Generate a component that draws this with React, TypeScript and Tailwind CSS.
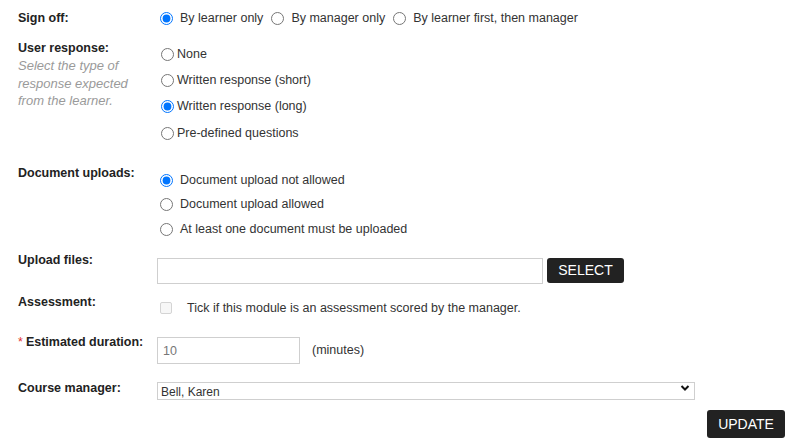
import React from "react";

const font = { fontFamily: '"Liberation Sans", Arial, sans-serif' };

const Label: React.FC<{ children: React.ReactNode; required?: boolean }> = ({ children, required }) => (
  <div className="w-[139px] shrink-0 text-[12.5px] leading-[18px] font-bold text-[#222]">
    {required && <span className="text-[#e3342f] font-normal mr-[3px]">*</span>}
    {children}
  </div>
);

const Radio: React.FC<{ name: string; checked?: boolean }> = ({ name, checked }) => (
  <input
    type="radio"
    name={name}
    defaultChecked={checked}
    className="m-0 w-[13px] h-[13px] shrink-0 accent-[#0075ff]"
  />
);

const signOff = ["By learner only", "By manager only", "By learner first, then manager"];
const responses = ["None", "Written response (short)", "Written response (long)", "Pre-defined questions"];
const uploads = ["Document upload not allowed", "Document upload allowed", "At least one document must be uploaded"];

export default function App() {
  return (
    <div className="w-[789px] h-[439px] bg-white pl-[18px] pt-[9px] text-[#333] overflow-hidden" style={font}>
      {/* sign off */}
      <div className="flex items-start h-[30px]">
        <Label>Sign off:</Label>
        <div className="flex items-center h-[18px] pl-[3px] text-[12.5px]">
          {signOff.map((s, i) => (
            <label key={s} className="flex items-center">
              <Radio name="signoff" checked={i === 0} />
              <span className="ml-[7px] mr-[8px]">{s}</span>
            </label>
          ))}
        </div>
      </div>

      {/* user response */}
      <div className="flex items-start h-[125px]">
        <div className="w-[139px] shrink-0">
          <Label>User response:</Label>
          <p className="italic text-[13px] leading-[17.5px] text-[#9a9a9a] w-[110px]">
            Select the type of response expected from the learner.
          </p>
        </div>
        <div className="flex flex-col pt-[2px] pl-[4px] text-[12.5px]">
          {responses.map((r, i) => (
            <label key={r} className="flex items-center h-[26.3px]">
              <Radio name="response" checked={i === 2} />
              <span className="ml-[3px]">{r}</span>
            </label>
          ))}
        </div>
      </div>

      {/* document uploads */}
      <div className="flex items-start h-[87px]">
        <Label>Document uploads:</Label>
        <div className="flex flex-col pt-[4px] pl-[3px] text-[12.5px]">
          {uploads.map((u, i) => (
            <label key={u} className="flex items-center h-[24.5px]">
              <Radio name="uploads" checked={i === 0} />
              <span className="ml-[7px]">{u}</span>
            </label>
          ))}
        </div>
      </div>

      {/* upload files */}
      <div className="flex items-start h-[42px]">
        <Label>Upload files:</Label>
        <div className="flex mt-[7px] gap-[4px]">
          <input type="text" className="w-[386px] h-[26px] border border-[#cfcfcf] outline-none" />
          <button className="w-[77px] h-[25px] bg-[#222] text-white text-[14px] rounded-[3px]">SELECT</button>
        </div>
      </div>

      {/* assessment */}
      <div className="flex items-start h-[40px]">
        <Label>Assessment:</Label>
        <div className="flex items-center h-[18px] mt-[6px] text-[12.5px]">
          <span className="ml-[3px] w-[12px] h-[12px] rounded-[2px] border border-[#d4d4d4] bg-[#f7f7f7]" />
          <span className="ml-[15px]">Tick if this module is an assessment scored by the manager.</span>
        </div>
      </div>

      {/* estimated duration */}
      <div className="flex items-start h-[46px]">
        <Label required>Estimated duration:</Label>
        <div className="flex items-center mt-[4px] text-[12.5px]">
          <input
            type="text"
            defaultValue="10"
            className="w-[143px] h-[27px] border border-[#cfcfcf] px-[5px] text-[#777] outline-none"
          />
          <span className="ml-[12px]">(minutes)</span>
        </div>
      </div>

      {/* course manager */}
      <div className="flex items-start h-[31px]">
        <Label>Course manager:</Label>
        <div className="relative w-[538px] h-[18px]">
          <select className="appearance-none w-full h-full border border-[#cfcfcf] pl-[3px] text-[12px] text-[#333] bg-white outline-none">
            <option>Bell, Karen</option>
          </select>
          <svg
            className="absolute right-[5px] top-[5px] pointer-events-none"
            width="10"
            height="8"
            viewBox="0 0 10 8"
          >
            <path d="M1.5 2 L5 5.5 L8.5 2" fill="none" stroke="#111" strokeWidth="2" />
          </svg>
        </div>
      </div>

      {/* update */}
      <div className="flex justify-end pr-[4px]">
        <button className="w-[78px] h-[28px] bg-[#222] text-white text-[14px] rounded-[3px]">UPDATE</button>
      </div>
    </div>
  );
}
